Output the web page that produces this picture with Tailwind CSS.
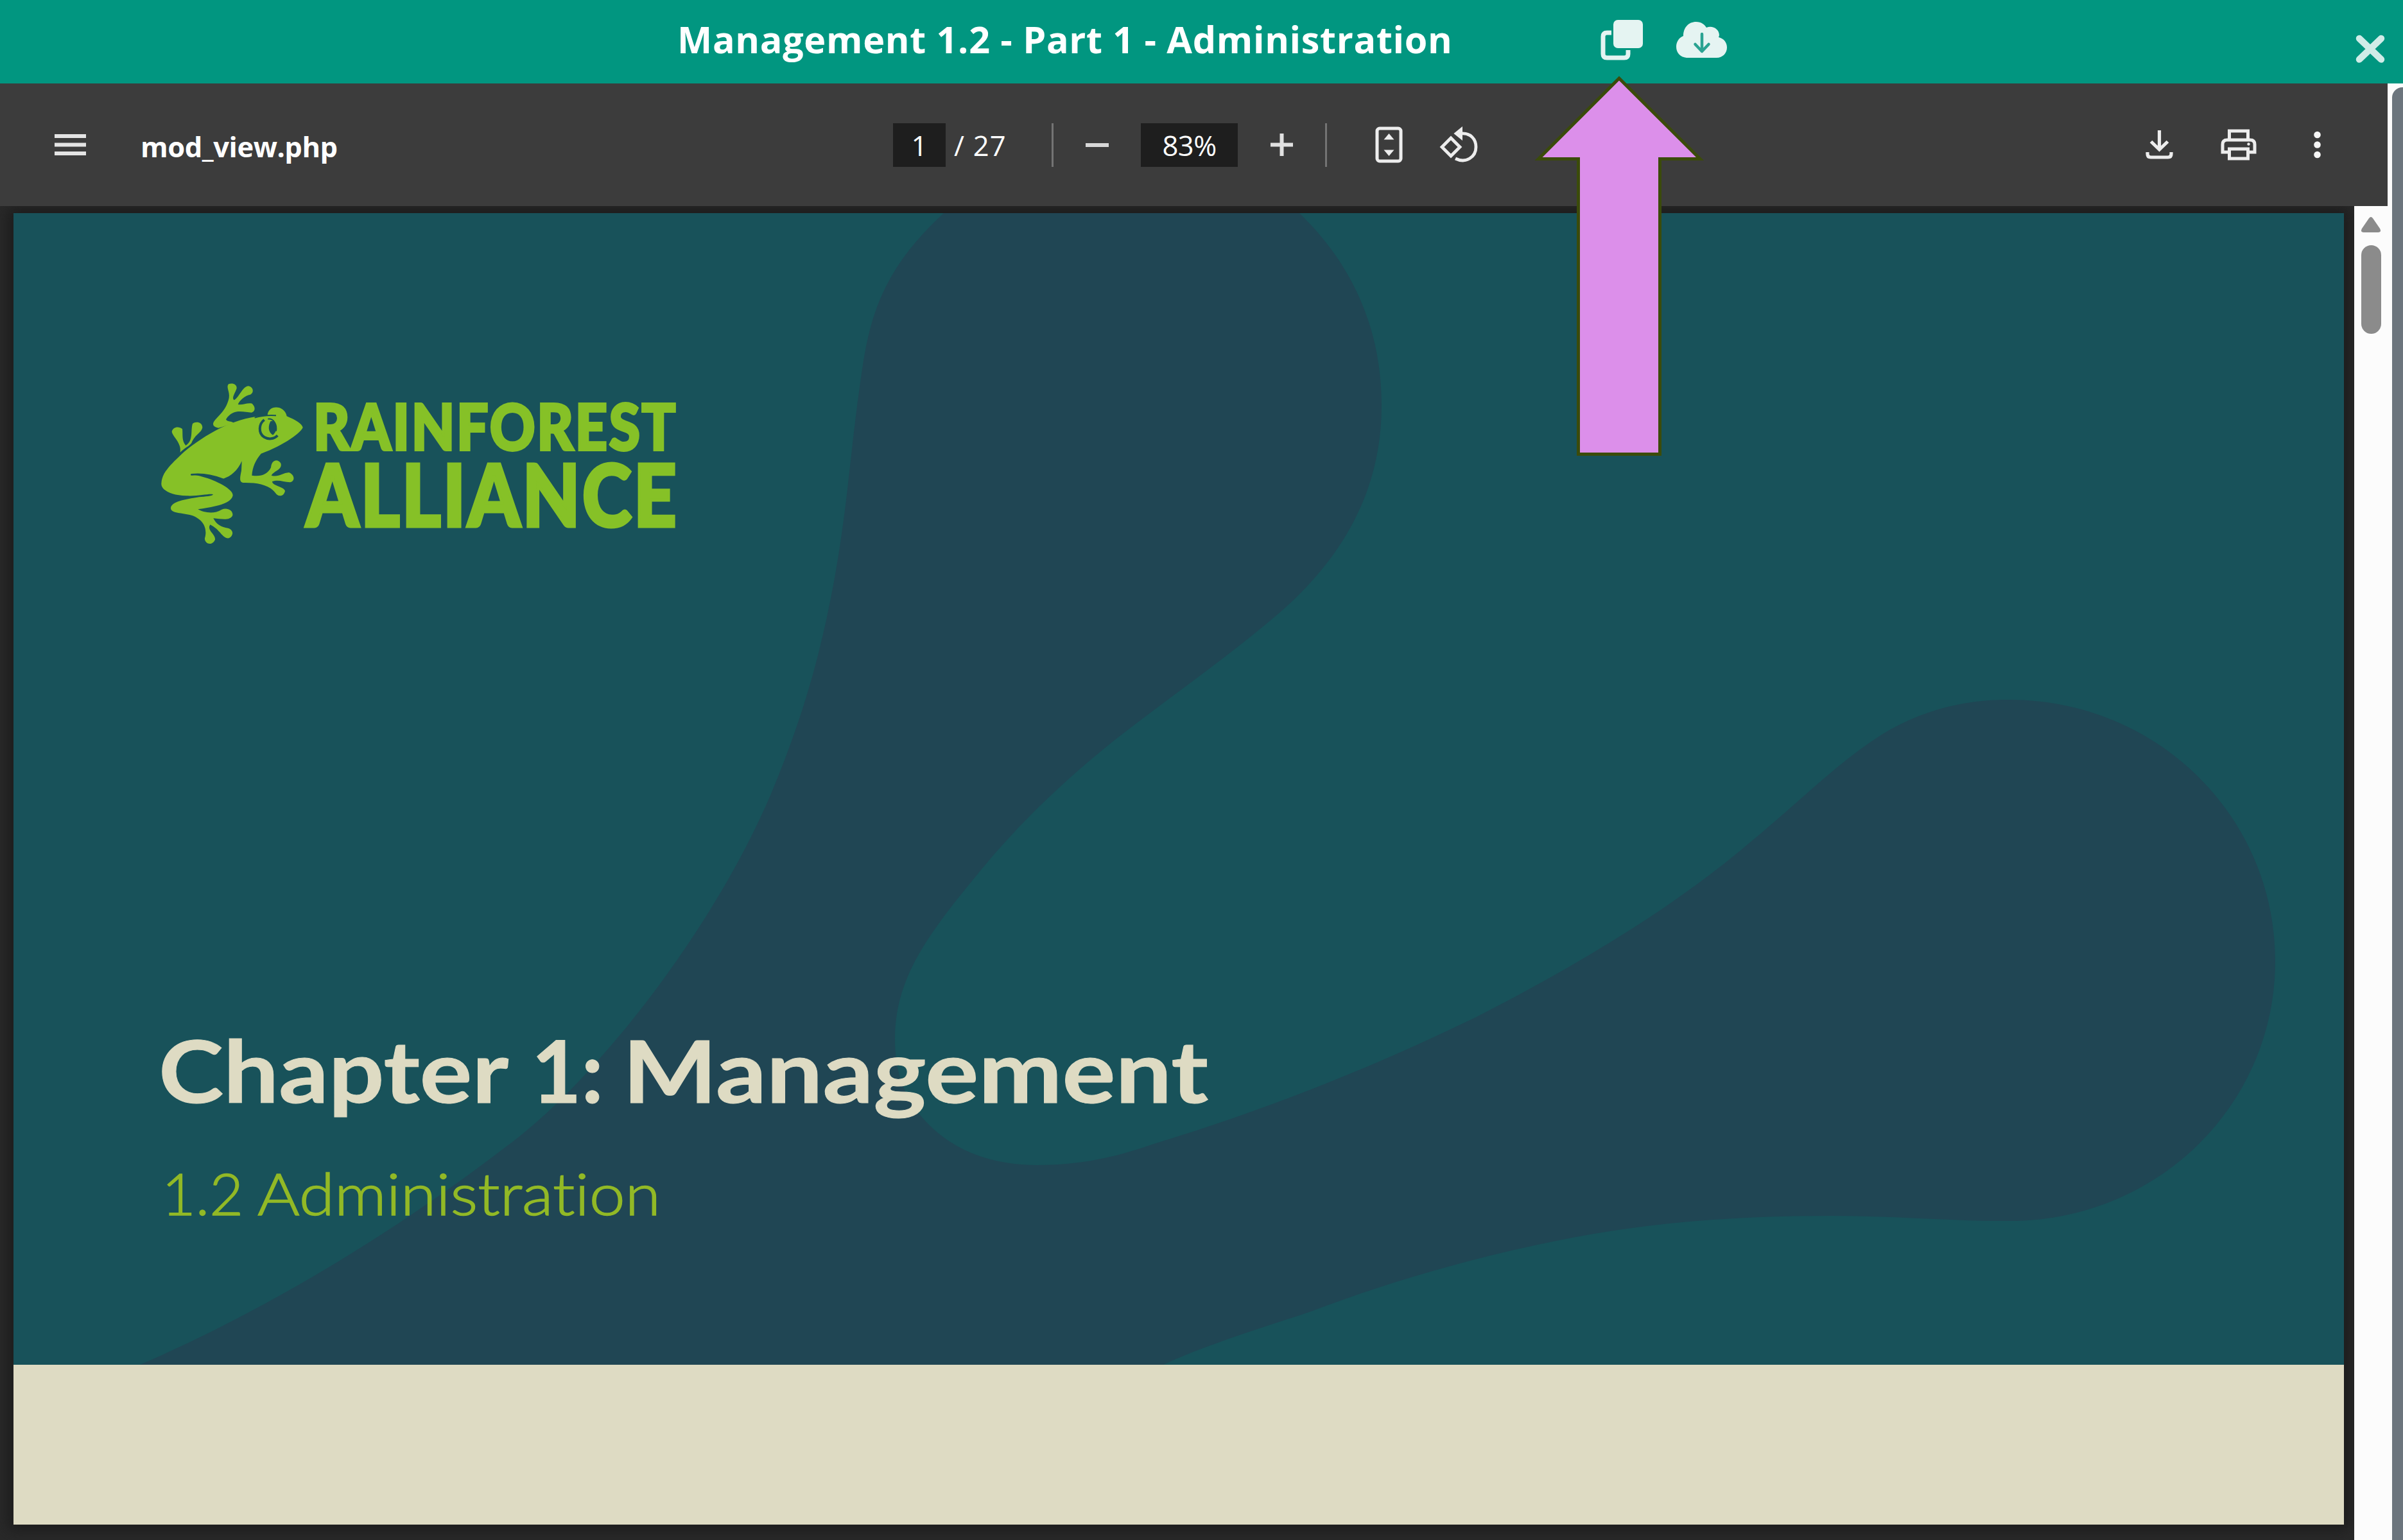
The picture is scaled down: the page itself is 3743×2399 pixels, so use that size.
<!DOCTYPE html>
<html lang="en">
<head>
<meta charset="utf-8">
<title>Management 1.2 - Part 1 - Administration</title>
<script src="https://cdn.jsdelivr.net/npm/@tailwindcss/browser@4"></script>
</head>
<body class="relative w-[3743px] h-[2399px] overflow-hidden flex flex-col bg-[#292929] font-['Open_Sans',sans-serif] text-white">

<!-- Title bar -->
<header class="h-[130px] shrink-0 flex items-start bg-[#019680] pl-[1055px]">
  <h1 class="w-[1438px] h-[122px] leading-[122px] text-[57.5px] font-bold tracking-[0.68px] whitespace-nowrap">Management 1.2 - Part 1 - Administration</h1>
  <svg class="mt-[30px] w-[66px] h-[66px] shrink-0" viewBox="0 0 66 66" fill="#e5f4f2">
    <rect x="20" y="1" width="46" height="44" rx="7"/>
    <path d="M17 21H10Q4 21 4 27V54Q4 60 10 60H37Q43 60 43 54V48" fill="none" stroke="#e5f4f2" stroke-width="7"/>
  </svg>
  <svg class="mt-[32px] ml-[51px] w-[81px] h-[60px] shrink-0" viewBox="0 0 81 60">
    <path d="M17 58C7 57 1 50 1 41C1 33 5 27 12 24C12 11 20 2 32 2C40 2 45 6 48 11C57 7 68 13 68 23L67 26C75 28 80 34 80 42C80 51 73 58 64 58Z" fill="#e5f4f2"/>
    <path d="M41 21V48M30.500 37L41 48L51.500 37" fill="none" stroke="#2aa392" stroke-width="4.500" stroke-linecap="round" stroke-linejoin="round"/>
  </svg>
  <svg class="ml-auto mr-[27px] mt-[53px] w-[48px] h-[48px] shrink-0" viewBox="0 0 48 48">
    <path d="M7 7L41 39.500M41 7L7 39.500" stroke="#d0ece8" stroke-width="10.500" stroke-linecap="round"/>
  </svg>
</header>

<div class="flex h-[2269px] shrink-0">
  <main class="w-[3719px] flex flex-col">
    <!-- Viewer toolbar -->
    <div class="h-[191px] shrink-0 flex items-center bg-[#3c3c3c] text-[43.5px] whitespace-nowrap">
      <svg class="ml-[85px] w-[49px] h-[36px]" viewBox="0 0 49 36" fill="#e4e4e4"><path d="M0 1H49V7H0ZM0 14.500H49V20.500H0ZM0 28H49V34H0Z"/></svg>
      <span class="ml-[85px] w-[1172px] font-bold tracking-[-0.45px] pt-[7px]">mod_view.php</span>
      <span class="w-[82px] h-[68px] leading-[70px] bg-[#1e1e1e] text-center font-medium">1</span>
      <span class="ml-[13px] w-[152px] font-medium tracking-[1.2px] pt-[2px]">/ 27</span>
      <span class="w-[3px] h-[68px] bg-[#747474]"></span>
      <span class="ml-[50px] w-[36px] h-[6px] bg-[#d8d8d8]"></span>
      <span class="ml-[50px] w-[151px] h-[68px] leading-[70px] bg-[#1e1e1e] text-center font-medium tracking-[-0.5px]">83%</span>
      <svg class="ml-[51px] w-[35px] h-[35px]" viewBox="0 0 35 35" fill="#e0e0e0"><path d="M14.500 0H20.500V14.500H35V20.500H20.500V35H14.500V20.500H0V14.500H14.500Z"/></svg>
      <span class="ml-[50px] w-[3px] h-[68px] bg-[#747474]"></span>
      <svg class="ml-[75px] w-[43px] h-[57px]" viewBox="0 0 43 57">
        <rect x="3" y="3" width="37" height="51" rx="4" fill="none" stroke="#ededed" stroke-width="5"/>
        <path d="M21.500 11L29.500 20.500H13.500ZM21.500 46L29.500 36.500H13.500Z" fill="#ededed"/>
      </svg>
      <svg class="ml-[57px] w-[60px] h-[57px]" viewBox="0 0 60 57" fill="none" stroke="#ededed" stroke-width="4.800">
        <path d="M18 18L32 32L18 46L4 32Z"/>
        <path d="M34 11C49 10 57 20 57 32C57 48 41 58 25 50"/>
        <path d="M35 2V20L24 11Z" fill="#ededed" stroke-width="2"/>
      </svg>
      <svg class="ml-[1040px] w-[43px] h-[46px]" viewBox="0 0 43 46" fill="none" stroke="#ededed" stroke-width="5.200">
        <path d="M21.500 0V29M8.500 17.500L21.500 30L34.500 17.500M3 34V37Q3 42 8 42H35Q40 42 40 37V34"/>
      </svg>
      <svg class="ml-[74px] w-[56px] h-[50px]" viewBox="0 0 56 50" fill="none" stroke="#ededed" stroke-width="5">
        <path d="M13.500 16V3H42.500V16M11 36H3V24Q3 17 10 17H46Q53 17 53 24V36H45M13.500 31H42.500V46H13.500Z"/>
        <circle cx="43.500" cy="23.500" r="2.200" fill="#ededed" stroke="none"/>
      </svg>
      <svg class="ml-[88px] w-[13px] h-[46px]" viewBox="0 0 13 46" fill="#f6f6f6"><circle cx="6.500" cy="7" r="5.300"/><circle cx="6.500" cy="22.500" r="5.300"/><circle cx="6.500" cy="38" r="5.300"/></svg>
    </div>

    <div class="flex h-[2078px] shrink-0">
      <!-- Document page -->
      <div class="w-[3667px] pt-[11px] pl-[21px] overflow-hidden bg-[#292929]">
        <section class="w-[3630px] shadow-[0_0_20px_8px_#1c1c1c]">
          <svg class="block w-[3630px] h-[1794px] bg-[#18525a]" viewBox="21 332 3630 1794">
            <path fill="#204654" d="M1470 332C1385 410 1358 480 1345 562C1325 690 1322 780 1299 906C1278 1020 1250 1120 1200 1239C1105 1460 920 1690 790 1785C640 1900 440 2030 218 2126H1812C1870 2098 1960 2070 2042 2043C2160 1998 2290 1960 2424 1933C2560 1905 2700 1894 2853 1894C2950 1894 3030 1902 3129 1902C3360 1902 3544 1722 3544 1497C3544 1272 3360 1090 3129 1090C3055 1090 2990 1108 2930 1145C2860 1190 2805 1247 2731 1308C2610 1412 2460 1502 2302 1583C2140 1662 1975 1728 1797 1782C1735 1804 1680 1815 1616 1815C1540 1815 1475 1790 1430 1733C1405 1700 1394 1665 1394 1618C1394 1520 1450 1450 1529 1354C1590 1280 1660 1214 1736 1153C1830 1080 1920 1018 1996 952C2095 865 2152 760 2152 632C2152 510 2105 410 2024 332Z"/>

            <!-- Frog mark -->
            <svg x="230" y="580" width="460" height="290" viewBox="0 0 1380 870" fill="#86c127">
              <path d="M64 520C66 480 85 450 170 372C270 290 400 215 530 205L560 203C560 150 640 150 650 205C690 222 722 240 725 258C718 280 640 340 530 380C505 410 490 440 487 482C530 488 560 478 576 445C580 405 610 405 622 425C632 455 590 460 578 482C610 492 630 470 660 468C690 480 688 510 665 514C635 512 610 500 582 510C580 530 640 535 642 555C635 585 605 580 598 565C570 525 510 515 450 516C425 515 432 490 438 460L440 415C420 460 390 485 352 498C310 490 260 465 205 478C280 485 400 540 398 575C390 620 290 630 235 640C260 655 310 665 345 642C370 630 400 645 397 668C385 695 345 685 307 682C320 710 345 725 375 728C400 735 405 760 380 775C350 780 340 735 292 712C275 740 318 755 315 782C300 815 265 800 267 775C278 740 270 690 205 668C160 655 105 660 108 632C115 600 200 590 240 583C270 580 300 580 306 571C290 565 240 580 180 577C110 575 62 550 64 520Z"/>
              <path d="M306 240C310 215 365 190 380 120C385 90 365 70 378 55C395 48 418 55 416 75C410 95 390 120 404 130C430 115 440 70 470 64C495 68 498 95 480 104C455 108 430 130 422 150C445 155 465 140 488 146C508 165 500 185 485 188C450 188 400 165 366 220C370 232 395 228 400 236C380 245 350 255 330 260C312 255 306 250 306 240Z"/>
              <path d="M152 374C160 330 115 300 113 277C118 255 145 250 162 265C165 290 158 320 178 342C215 320 200 270 210 240C225 228 255 232 256 258C250 285 225 285 205 330C195 345 170 355 152 374Z"/>
              <path d="M205 478C260 472 310 484 352 500" fill="none" stroke="#18525a" stroke-width="8" stroke-linecap="round"/>
              <g fill="none" stroke="#18525a">
                <path d="M545 222C520 240 515 285 545 303C565 315 590 312 607 295" stroke-width="12"/>
                <path d="M500 212C540 200 570 200 600 202M562 218C590 215 605 245 600 275" stroke-width="6"/>
              </g>
              <path d="M575 228C562 250 562 280 585 293C608 275 605 235 585 228Z" fill="#18525a"/>
            </svg>
            <g fill="#86c127" stroke="#86c127" font-family="Lato, sans-serif" font-weight="900">
              <text x="488" y="701" font-size="100" letter-spacing="3" stroke-width="4" textLength="567" lengthAdjust="spacingAndGlyphs">RAINFOREST</text>
              <text x="477" y="820" font-size="134" letter-spacing="4" stroke-width="5" textLength="580" lengthAdjust="spacingAndGlyphs">ALLIANCE</text>
            </g>

            <text y="1718" font-family="Lato, sans-serif" font-weight="700" font-size="135" fill="#dedbc3" stroke="#dedbc3" stroke-width="1"><tspan x="247" textLength="542" lengthAdjust="spacingAndGlyphs">Chapter</tspan> <tspan x="828" textLength="112" lengthAdjust="spacingAndGlyphs">1:</tspan> <tspan x="970" textLength="912" lengthAdjust="spacingAndGlyphs">Management</tspan></text>
            <text y="1893" font-family="Lato, sans-serif" font-weight="300" font-size="90" fill="#92b926" stroke="#92b926" stroke-width="1.500" style="font-variant-ligatures:none"><tspan x="252" textLength="127" lengthAdjust="spacingAndGlyphs">1.2</tspan> <tspan x="401" textLength="628" lengthAdjust="spacingAndGlyphs">Administration</tspan></text>
          </svg>
          <div class="h-[249px] bg-[#dedbc3]"></div>
        </section>
      </div>
      <!-- Viewer scrollbar -->
      <div class="w-[52px] bg-[#fcfcfc] flex flex-col items-center pt-[16px]">
        <svg class="w-[32px] h-[25px]" viewBox="0 0 32 25"><path d="M13 3Q16 -1 19 3L30 19Q33 25 27 25H5Q-1 25 2 19Z" fill="#8b8b8b"/></svg>
        <div class="mt-[20px] w-[31px] h-[138px] rounded-full bg-[#8b8b8b]"></div>
      </div>
    </div>
  </main>
  <!-- Dialog scrollbar -->
  <div class="w-[24px] bg-[#fcfcfc] pl-[7px] pt-[6px]">
    <div class="w-[17px] h-[2263px] rounded-tl-[16px] bg-[#6c757d]"></div>
  </div>
</div>

<!-- Callout arrow -->
<svg class="absolute left-[2385px] top-[112px] w-[276px] h-[604px]" viewBox="2385 112 276 604">
  <path d="M2522 122L2648 247.500H2585.500V707.500H2458.500V247.500H2396.500Z" fill="#dc8fea" stroke="#3b4b0b" stroke-width="5"/>
</svg>
</body>
</html>
